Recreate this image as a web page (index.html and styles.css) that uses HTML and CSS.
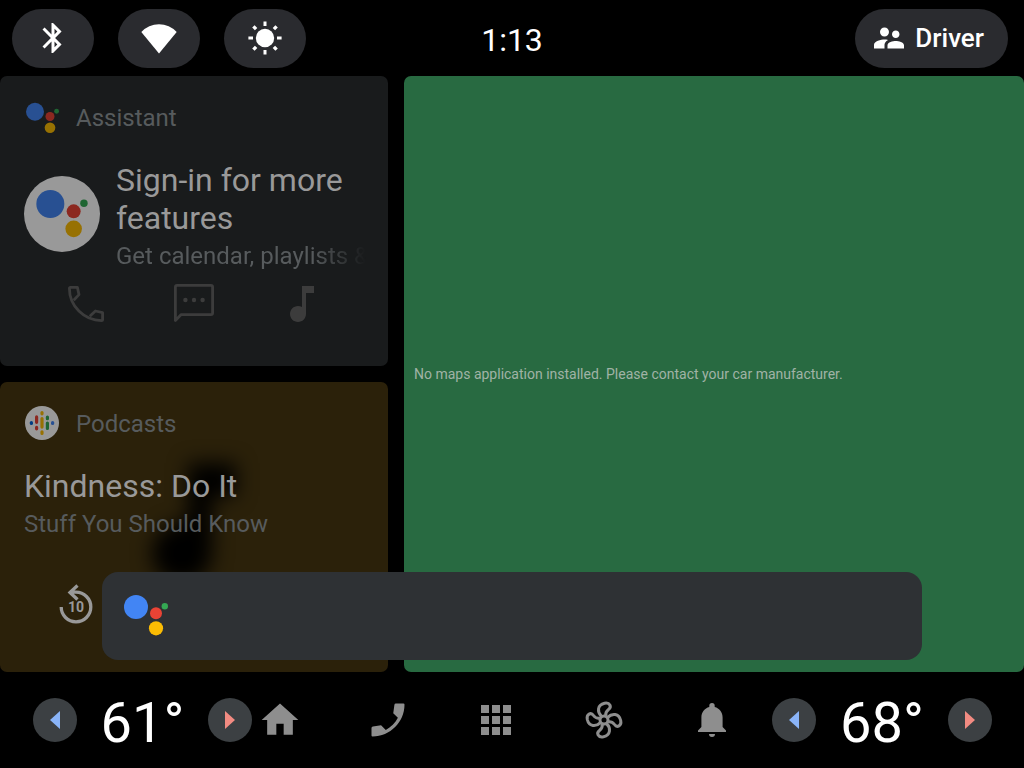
FILE: index.html
```html
<!DOCTYPE html>
<html lang="en">
<head>
    <meta charset="UTF-8">
    <meta name="viewport" content="width=device-width, initial-scale=1.0">
    <title>Car Home</title>
    <link rel="stylesheet" href="styles.css">
</head>
<body>
    <svg class="defs" aria-hidden="true">
        <symbol id="assistant" viewBox="0 0 44 42">
            <circle cx="12" cy="12" r="12" fill="#4285f4"/>
            <circle cx="32" cy="18.3" r="6" fill="#ea4335"/>
            <circle cx="32" cy="33.3" r="7.1" fill="#fbbc04"/>
            <circle cx="40.8" cy="11.3" r="3.2" fill="#34a853"/>
        </symbol>
        <symbol id="note" viewBox="0 0 24 24">
            <path d="M12 3v10.55c-.59-.34-1.27-.55-2-.55-2.21 0-4 1.79-4 4s1.79 4 4 4 4-1.79 4-4V6.5h4V3h-6z"/>
        </symbol>
    </svg>

    <header class="status-bar">
        <div class="quick">
            <button class="pill" aria-label="Bluetooth">
                <svg width="36" height="36" viewBox="0 0 24 24"><path d="M17.71 7.71L12 2h-1v7.59L6.41 5 5 6.41 10.59 12 5 17.59 6.41 19 11 14.41V22h1l5.71-5.71-4.3-4.29 4.3-4.29zM13 5.83l1.88 1.88L13 9.59V5.83zm1.88 10.46L13 18.17v-3.76l1.88 1.88z"/></svg>
            </button>
            <button class="pill" aria-label="Wi-Fi">
                <svg width="36" height="36" viewBox="0 0 36 36"><path d="M18 33.5L.3 12A24 24 0 0 1 35.7 12z"/></svg>
            </button>
            <button class="pill" aria-label="Brightness">
                <svg width="36" height="36" viewBox="-18 -18 36 36">
                    <circle r="9.2"/>
                    <g stroke="#fff" stroke-width="3">
                        <path d="M0-12v-4.600M0 12v4.600M-12 0h-4.600M12 0h4.600"/>
                        <path stroke-width="3.400" d="M8.900-8.900l2.700-2.700M-8.900-8.900l-2.700-2.700M8.900 8.900l2.700 2.700M-8.900 8.900l-2.700 2.700"/>
                    </g>
                </svg>
            </button>
        </div>
        <time class="clock">1:13</time>
        <button class="pill user">
            <svg width="36" height="36" viewBox="0 0 24 24"><path d="M16.5 12c1.38 0 2.49-1.12 2.49-2.5S17.88 7 16.5 7C15.12 7 14 8.12 14 9.5s1.12 2.5 2.5 2.5zM9 11c1.66 0 2.99-1.34 2.99-3S10.66 5 9 5C7.34 5 6 6.34 6 8s1.34 3 3 3zm7.500 3c-1.83 0-5.5.92-5.5 2.75V19h11v-2.25c0-1.83-3.67-2.75-5.5-2.75zM9 13c-2.33 0-7 1.17-7 3.5V19h7v-2.25c0-.85.33-2.34 2.37-3.47C10.5 13.1 9.66 13 9 13z"/></svg>
            <span>Driver</span>
        </button>
    </header>

    <main class="home">
        <div class="cards">
            <section class="card">
                <div class="card-header">
                    <span class="app-icon dim"><svg width="33" height="33"><use href="#assistant"/></svg></span>
                    <span>Assistant</span>
                </div>
                <div class="card-body">
                    <div class="avatar dim"><svg width="52" height="49"><use href="#assistant"/></svg></div>
                    <div class="card-text">
                        <h2>Sign-in for more features</h2>
                        <p class="fade">Get calendar, playlists &amp;</p>
                    </div>
                </div>
                <div class="actions">
                    <button aria-label="Call">
                        <svg width="48" height="48" viewBox="0 0 48 48"><path class="line" d="M7.4 8.5q0-1.100 1.100-1.100H15.400L17 14.600l-5.300 5.600M27.800 36.300L33.400 31l7.200 1.600V39.500q0 1.100-1.100 1.100C22 40.600 7.400 26 7.400 8.500"/></svg>
                    </button>
                    <button aria-label="Message">
                        <svg width="48" height="48" viewBox="0 0 48 48">
                            <path class="line" d="M5.400 40.400V7q0-1.600 1.600-1.600H41q1.600 0 1.600 1.600V33q0 1.600-1.600 1.600H11.200z"/>
                            <circle cx="15.400" cy="20" r="2.200"/><circle cx="24" cy="20" r="2.200"/><circle cx="32.600" cy="20" r="2.200"/>
                        </svg>
                    </button>
                    <button aria-label="Music">
                        <svg width="48" height="48"><use href="#note"/></svg>
                    </button>
                </div>
            </section>

            <section class="card media">
                <svg class="artwork" width="144" height="144"><use href="#note"/></svg>
                <div class="card-header">
                    <span class="app-icon dim">
                        <svg width="36" height="36" viewBox="-18 -17 36 36">
                            <circle r="17" fill="#fff"/>
                            <g stroke-width="3.200" stroke-linecap="round">
                                <path stroke="#0066da" d="M-10.600-.5v1"/>
                                <path stroke="#ea4335" d="M-5.400-6.100v5.400M-5.400 4.400v1.400"/>
                                <path stroke="#fbbc04" d="M0-10.400v1.200M0-4.500v8.600M0 8.800v1.600"/>
                                <path stroke="#34a853" d="M5.400-6v1.700M5.400.1v5.400"/>
                                <path stroke="#4285f4" d="M10.600-.5v1"/>
                            </g>
                        </svg>
                    </span>
                    <span>Podcasts</span>
                </div>
                <div class="card-body">
                    <div class="card-text">
                        <h2>Kindness: Do It</h2>
                        <p>Stuff You Should Know</p>
                    </div>
                </div>
                <div class="playback">
                    <button aria-label="Replay 10 seconds">
                        <svg width="48" height="48" viewBox="-24 -24 48 48">
                            <path d="M-14.800 2A14.800 14.800 0 1 0 0-12.800h-4M1.500-19.500L-6-12.600 1.500-5.500" fill="none" stroke="#999" stroke-width="3.300"/>
                            <text x="0" y="7" text-anchor="middle">10</text>
                        </svg>
                    </button>
                </div>
            </section>
        </div>

        <section class="map">
            <p>No maps application installed. Please contact your car manufacturer.</p>
        </section>

        <div class="assist-bar">
            <svg width="44" height="42"><use href="#assistant"/></svg>
        </div>
    </main>

    <footer class="dock">
        <div class="climate">
            <button class="cooler" aria-label="Cooler"><svg width="10" height="18"><path d="M10 0v18L0 9z"/></svg></button>
            <span class="temp">61°</span>
            <button class="warmer" aria-label="Warmer"><svg width="10" height="18"><path d="M0 0v18l10-9z"/></svg></button>
        </div>
        <nav>
            <button aria-label="Home">
                <svg width="44" height="44" viewBox="0 0 24 24"><path d="M10 20v-6h4v6h5v-8h3L12 3 2 12h3v8z"/></svg>
            </button>
            <button aria-label="Phone">
                <svg width="44" height="44" viewBox="0 0 24 24"><path transform="matrix(-1 0 0 1 24 0)" d="M20.200 15.500l-4.400-.6-2.600 2.500c-2.830-1.440-5.150-3.750-6.590-6.590l2.530-2.530L8.500 3.700Q8.400 3 7.700 3H3.600Q3 3 3 3.600C3 13.200 10.800 21 20.400 21q.6 0 .6-.6V16.300q0-.7-.8-.8z"/></svg>
            </button>
            <button aria-label="Apps">
                <svg width="30" height="30"><path d="M0 0h8v8H0zM11 0h8v8h-8zM22 0h8v8h-8zM0 11h8v8H0zM11 11h8v8h-8zM22 11h8v8h-8zM0 22h8v8H0zM11 22h8v8h-8zM22 22h8v8h-8z"/></svg>
            </button>
            <button aria-label="Climate">
                <svg width="40" height="40" viewBox="-20 -20 40 40">
                    <g fill="none" stroke="#8e8e8e" stroke-width="3">
                        <circle r="4"/>
                        <path id="blade" d="M-2.600-3.600C-7-8-6.800-15 .5-16.700 6-17.800 8-13 4.500-10.500 1.800-8.500 1.400-6.500 1.800-4"/>
                        <use href="#blade" transform="rotate(90)"/>
                        <use href="#blade" transform="rotate(180)"/>
                        <use href="#blade" transform="rotate(270)"/>
                    </g>
                </svg>
            </button>
            <button aria-label="Notifications">
                <svg width="40" height="40" viewBox="-20 -20 40 40"><path d="M0-17a2.700 2.700 0 0 1 2.700 2.700v1.400C7.400-11.600 10.600-7.500 10.600-2.500V7L14 10.500V12h-28v-1.500L-10.600 7v-9.500c0-5 3.200-9.100 7.900-10.400v-1.400A2.700 2.700 0 0 1 0-17zM-3 14h6a3 3 0 0 1-6 0z"/></svg>
            </button>
        </nav>
        <div class="climate">
            <button class="cooler" aria-label="Cooler"><svg width="10" height="18"><path d="M10 0v18L0 9z"/></svg></button>
            <span class="temp">68°</span>
            <button class="warmer" aria-label="Warmer"><svg width="10" height="18"><path d="M0 0v18l10-9z"/></svg></button>
        </div>
    </footer>
</body>
</html>
```
FILE: styles.css
```css
* {
    box-sizing: border-box;
}
body {
    margin: 0;
    min-height: 100vh;
    display: flex;
    flex-direction: column;
    background: #000;
    color: #fff;
    font-family: Roboto, "Liberation Sans", sans-serif;
}
h2, p {
    margin: 0;
    font-weight: 400;
}
button {
    padding: 0;
    border: none;
    background: none;
    color: inherit;
    font-family: inherit;
    cursor: pointer;
}
svg {
    display: block;
    flex: none;
}
.defs {
    position: absolute;
    width: 0;
    height: 0;
}

/* status bar */
.status-bar {
    display: grid;
    grid-template-columns: 1fr auto 1fr;
    align-items: center;
    height: 76px;
    padding: 0 12px;
}
.quick {
    display: flex;
    gap: 24px;
}
.pill {
    display: flex;
    align-items: center;
    justify-content: center;
    width: 82px;
    height: 59px;
    border-radius: 30px;
    background: #2a2b2f;
    fill: #fff;
}
.user {
    justify-self: end;
    gap: 8px;
    width: auto;
    margin-right: 4px;
    padding: 0 24px 0 16px;
    font-size: 26px;
    font-weight: 500;
}
.clock {
    padding-top: 4px;
    font-size: 32px;
    line-height: 40px;
}

/* home screen */
.home {
    position: relative;
    flex: 1;
    display: grid;
    grid-template-columns: 388px 1fr;
    gap: 16px;
}
.cards {
    display: grid;
    grid-auto-rows: 1fr;
    gap: 16px;
}
.card {
    position: relative;
    overflow: hidden;
    padding: 24px;
    border-radius: 7px;
    background: #191b1c;
}
.media {
    background: #2b210a;
}
.artwork {
    position: absolute;
    top: 50%;
    left: 50%;
    margin: -76px -72px;
    fill: #000;
    stroke: #000;
    stroke-width: 2;
    overflow: visible;
    filter: blur(10px);
}
.card-header {
    position: relative;
    display: flex;
    align-items: center;
    gap: 16px;
    height: 36px;
    margin-bottom: 25px;
    color: #575b5d;
    font-size: 24px;
}
.app-icon {
    display: flex;
    align-items: center;
    justify-content: center;
    width: 36px;
    height: 36px;
}
.media .app-icon {
    align-items: flex-start;
}
.dim {
    filter: brightness(0.6);
}
.card-body {
    position: relative;
    display: flex;
    align-items: center;
    gap: 16px;
}
.avatar {
    display: flex;
    align-items: center;
    justify-content: center;
    flex: none;
    width: 76px;
    height: 76px;
    margin-bottom: 8px;
    border-radius: 50%;
    background: #fff;
}
.card-text {
    flex: 1;
    min-width: 0;
    line-height: 38px;
}
.card-text h2 {
    color: #999;
    font-size: 32px;
}
.card-text p {
    color: #575b5d;
    font-size: 24px;
    white-space: nowrap;
}
.card-text .fade {
    margin-right: -16px;
    -webkit-mask-image: linear-gradient(to left, transparent 14px, #000 68px);
    mask-image: linear-gradient(to left, transparent 14px, #000 68px);
}
.actions {
    display: flex;
    justify-content: center;
    gap: 60px;
    margin-top: 5px;
    fill: #3c3c3c;
}
.line {
    fill: none;
    stroke: #3c3c3c;
    stroke-width: 2.8;
    stroke-linejoin: round;
}
.playback {
    position: relative;
    margin-top: 38px;
    padding-left: 28px;
}
.playback text {
    fill: #999;
    font-size: 14px;
    font-weight: 700;
}
.map {
    display: flex;
    align-items: center;
    padding: 10px;
    border-radius: 7px;
    background: #286a41;
    color: #a0b3a6;
    font-size: 14px;
}
.assist-bar {
    position: absolute;
    left: 102px;
    right: 102px;
    bottom: 12px;
    display: flex;
    align-items: center;
    height: 88px;
    padding: 0 22px;
    border-radius: 16px;
    background: #2e3134;
}

/* bottom dock */
.dock {
    display: flex;
    align-items: center;
    height: 96px;
    padding: 0 32px 0 33px;
}
.climate {
    display: flex;
    align-items: center;
    justify-content: space-between;
    width: 220px;
}
.climate:first-child {
    width: 219px;
}
.climate button {
    display: flex;
    align-items: center;
    justify-content: center;
    width: 44px;
    height: 44px;
    border-radius: 50%;
    background: #3c4043;
}
.cooler {
    fill: #8ab4f8;
}
.warmer {
    fill: #f28b82;
}
.temp {
    padding-top: 5px;
    font-size: 56px;
    line-height: 64px;
}
.dock nav {
    flex: 1;
    display: flex;
    justify-content: space-between;
    margin-right: 32px;
    fill: #8e8e8e;
}
.dock nav button {
    display: flex;
    align-items: center;
    justify-content: center;
    width: 56px;
    height: 56px;
}
```
